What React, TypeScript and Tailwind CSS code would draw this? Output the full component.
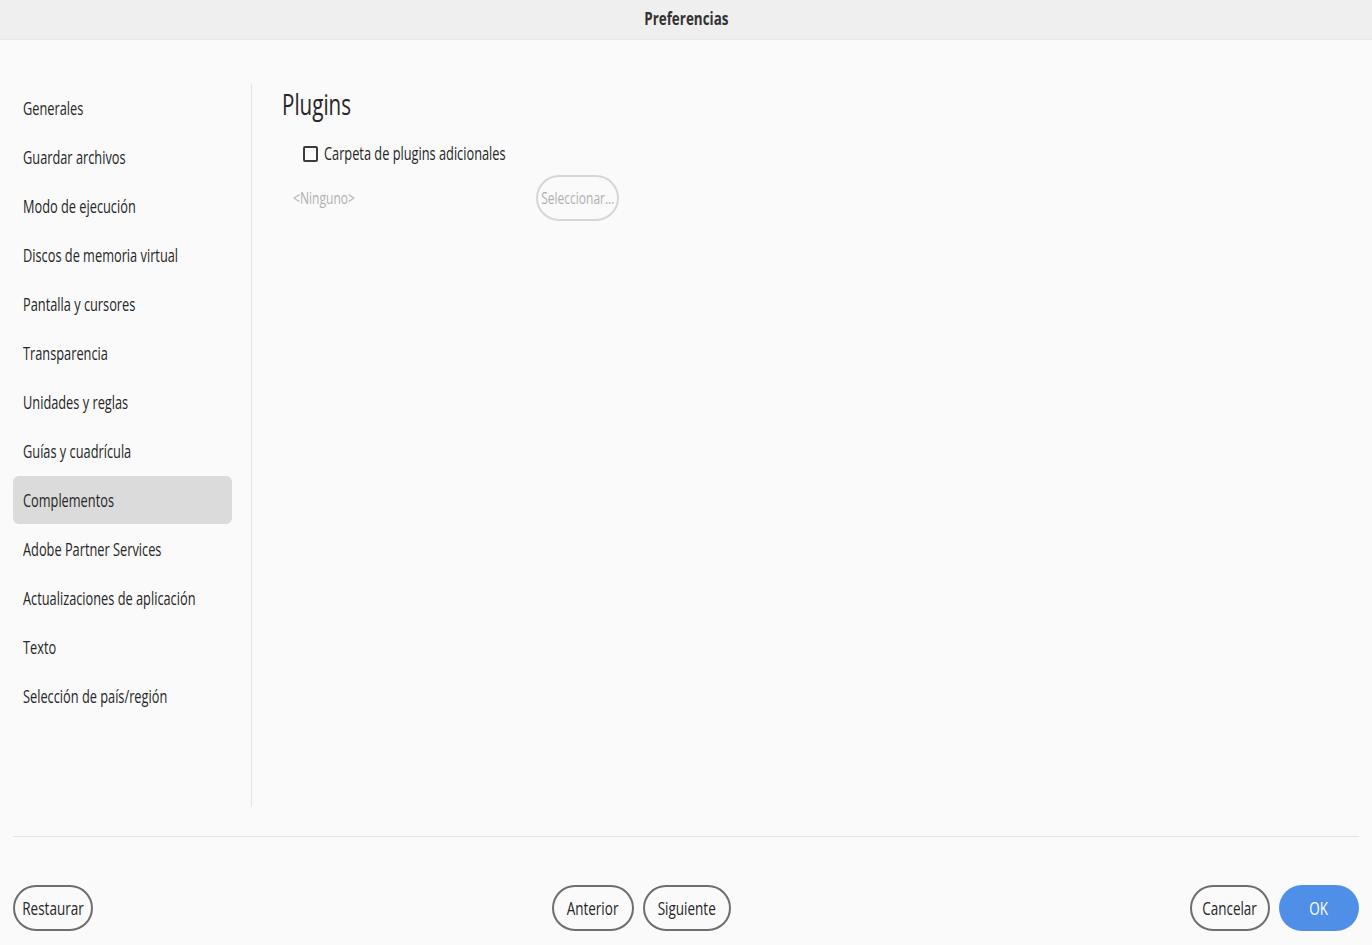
const items = [
  "Generales",
  "Guardar archivos",
  "Modo de ejecución",
  "Discos de memoria virtual",
  "Pantalla y cursores",
  "Transparencia",
  "Unidades y reglas",
  "Guías y cuadrícula",
  "Complementos",
  "Adobe Partner Services",
  "Actualizaciones de aplicación",
  "Texto",
  "Selección de país/región",
];

const font = { fontFamily: '"Open Sans", "Noto Sans", sans-serif' };

// the dialog uses a condensed face; squeeze Open Sans horizontally
function Narrow({ children }: { children: React.ReactNode }) {
  return <span className="inline-block origin-left scale-x-[0.71] whitespace-nowrap">{children}</span>;
}

function PillButton({ label, className = "" }: { label: string; className?: string }) {
  return (
    <button
      className={
        "flex h-[46px] items-center justify-center rounded-full border-2 border-[#6e6e6e] bg-[#fafafa] text-[18px] text-[#262626] " +
        className
      }
    >
      <span className="inline-block origin-center scale-x-[0.75] whitespace-nowrap">{label}</span>
    </button>
  );
}

export default function App() {
  return (
    <div className="flex h-[945px] w-[1372px] flex-col bg-[#fafafa] text-[#262626]" style={font}>
      <div className="flex h-[40px] shrink-0 items-center justify-center border-b border-[#e8e8e8] bg-[#efefef] pb-[2px] text-[17px] font-bold text-[#333]">
        <span className="inline-block origin-center scale-x-[0.79] whitespace-nowrap">Preferencias</span>
      </div>

      <div className="flex flex-1 px-[13px] pt-[44px]">
        <nav className="flex h-[723px] w-[239px] shrink-0 flex-col gap-px border-r border-[#e4e4e4] pr-[19px]">
          {items.map((item) => (
            <div
              key={item}
              className={
                "flex h-[48px] shrink-0 items-center rounded-[6px] px-[10px] text-[18px] " +
                (item === "Complementos" ? "bg-[#dbdbdb]" : "")
              }
            >
              <Narrow>{item}</Narrow>
            </div>
          ))}
        </nav>

        <section className="flex flex-col pl-[30px]">
          <h1 className="text-[29px] leading-[40px]">
            <Narrow>Plugins</Narrow>
          </h1>
          <label className="ml-[21px] mt-[16px] flex items-center gap-[6px] text-[18px]">
            <span className="h-[16px] w-[15px] shrink-0 rounded-[2px] border-2 border-[#3c3c3c]" />
            <Narrow>Carpeta de plugins adicionales</Narrow>
          </label>
          <div className="mt-[8px] flex items-center">
            <span className="w-[254px] pl-[11px] text-[17px] text-[#b0b0b0]">
              <Narrow>&lt;Ninguno&gt;</Narrow>
            </span>
            <button className="flex h-[46px] w-[83px] items-center justify-center rounded-full border-2 border-[#d6d6d6] text-[16px] text-[#b0b0b0]">
              <span className="inline-block origin-center scale-x-[0.75] whitespace-nowrap">Seleccionar...</span>
            </button>
          </div>
        </section>
      </div>

      <div className="mx-[13px] h-px bg-[#e6e6e6]" />

      <footer className="flex h-[108px] shrink-0 items-start px-[13px] pt-[48px]">
        <PillButton label="Restaurar" className="w-[80px]" />
        <div className="flex flex-1 justify-center gap-[9px]">
          <PillButton label="Anterior" className="w-[82px]" />
          <PillButton label="Siguiente" className="w-[88px]" />
        </div>
        <div className="flex gap-[9px]">
          <PillButton label="Cancelar" className="w-[80px]" />
          <button className="flex h-[46px] w-[80px] items-center justify-center rounded-full bg-[#4f8fe8] text-[18px] text-white">
            <span className="inline-block origin-center scale-x-[0.75]">OK</span>
          </button>
        </div>
      </footer>
    </div>
  );
}
